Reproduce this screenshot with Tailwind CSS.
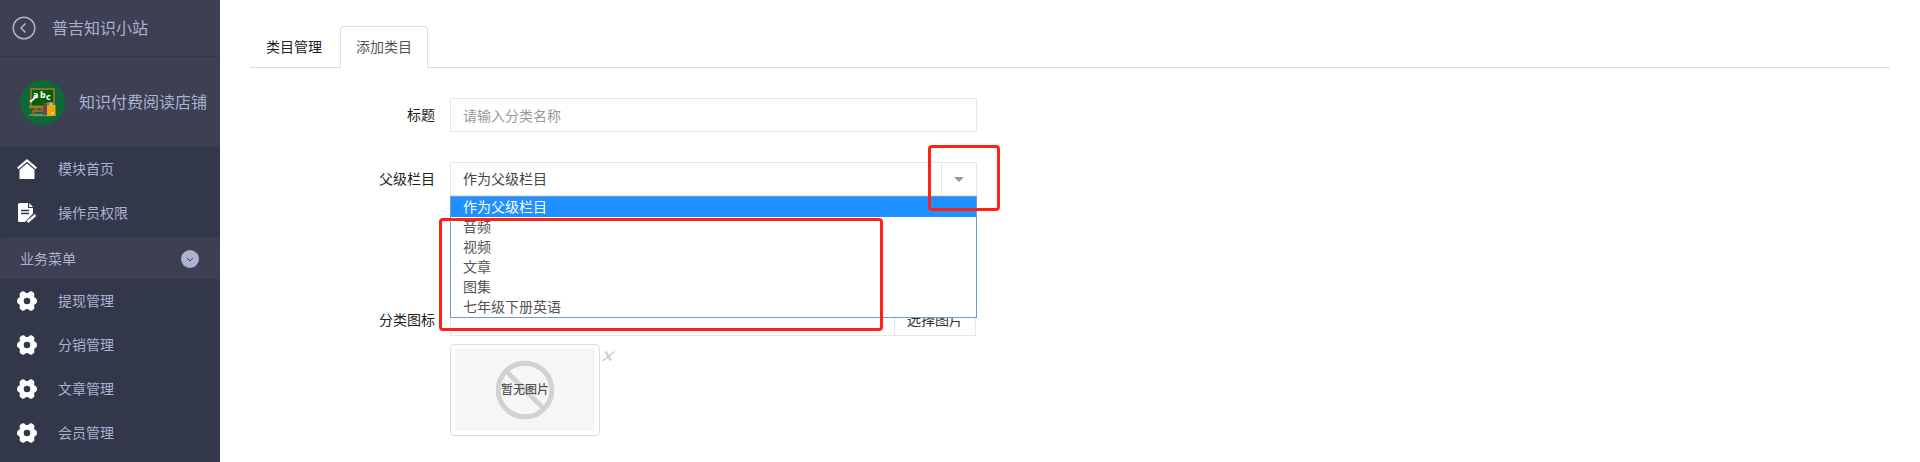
<!DOCTYPE html>
<html lang="zh-CN">
<head>
    <meta charset="UTF-8">
    <meta name="viewport" content="width=device-width, initial-scale=1.0">
    <title>添加类目</title>
    <script src="https://cdn.jsdelivr.net/npm/@tailwindcss/browser@4"></script>
</head>
<body class="bg-white font-['Noto_Sans_CJK_SC',sans-serif] text-sm text-[#333]">
    <!-- Shared icons -->
    <svg class="hidden">
        <symbol id="icon-gear" viewBox="0 0 20 20">
            <path fill-rule="evenodd" fill="#fff" d="M5 .5Q7-.2 8.300 1.500Q10 2.600 11.700 1.500Q13-.2 15 .5L17 2Q17.800 3.500 17 5Q17.200 6.800 18.800 7.300Q20 8 20 10Q20 12 18.800 12.700Q17.200 13.200 17 15Q17.800 16.500 17 18L15 19.500Q13 20.200 11.700 18.500Q10 17.400 8.300 18.500Q7 20.200 5 19.500L3 18Q2.200 16.500 3 15Q2.800 13.200 1.200 12.700Q0 12 0 10Q0 8 1.200 7.300Q2.800 6.800 3 5Q2.200 3.500 3 2ZM10 6.700A3.300 3.300 0 1 0 10 13.300A3.300 3.300 0 1 0 10 6.700Z"/>
        </symbol>
    </svg>

    <div class="flex min-h-screen">
        <!-- Sidebar -->
        <aside class="w-[220px] shrink-0 bg-[#33374a] text-[#abb1cf]">
            <a href="#" class="flex h-[57px] items-center gap-4 border-b border-[#33374a] bg-[#3c4052] pl-3 text-base">
                <svg class="size-6" viewBox="0 0 24 24" fill="none" stroke="currentColor">
                    <circle cx="12" cy="12" r="10.800" stroke-width="1.500"/>
                    <path d="M13.500 7.500L9 12l4.500 4.500" stroke-width="1.600"/>
                </svg>
                <span class="pb-0.5">普吉知识小站</span>
            </a>
            <div class="flex h-[90px] items-center gap-[14px] bg-[#3c4052] pl-5 text-base">
                <svg class="size-[45px] shrink-0" viewBox="0 0 45 45">
                    <circle cx="22.500" cy="22.500" r="22.500" fill="#0d6935"/>
                    <ellipse cx="22" cy="35" rx="14" ry="1.300" fill="#6d9377"/>
                    <path d="M18 27L12 35M20 27L29 35M12 31h14" stroke="#9a6424" stroke-width="2"/>
                    <rect x="11" y="9" width="23" height="17.500" fill="#075f08" stroke="#ad7430" stroke-width="1.500"/>
                    <path d="M9 27h17" stroke="#ad7430" stroke-width="2.500"/>
                    <path d="M10 22l7-6" stroke="#eee" stroke-width="2"/>
                    <g fill="#fff" font-family="DejaVu Sans" font-weight="bold" font-size="8">
                        <text x="13" y="18">a</text>
                        <text x="20" y="18">b</text>
                        <text x="26" y="20">c</text>
                    </g>
                    <path d="M23 23h5v12h-5z" fill="#5a5147"/>
                    <path d="M26 24l1-2h5l-1 4z" fill="#bd5363"/>
                    <path d="M29 25v-2.500h4v3z" fill="#79c8c9"/>
                    <path d="M27 25h8.500v11H27z" fill="#f5a30c"/>
                    <path d="M31 32h3v2h-3z" fill="#ffd35c"/>
                </svg>
                <span class="pb-0.5">知识付费阅读店铺</span>
            </div>
            <nav>
                <a href="#" class="flex h-11 items-center gap-[21px] pl-[17px]">
                    <svg class="size-5" viewBox="0 0 20 20">
                        <path d="M.7 9.300L10 1.500l9.300 7.800" fill="none" stroke="#fff" stroke-width="2.200"/>
                        <path d="M2.500 10.700L10 4.500l7.500 6.200V20h-15z" fill="#fff"/>
                    </svg>
                    <span class="pb-0.5">模块首页</span>
                </a>
                <a href="#" class="mb-[3px] flex h-11 items-center gap-[21px] pl-[17px]">
                    <svg class="size-5" viewBox="0 0 20 20">
                        <path d="M2.500 0H11v5h5v5.500L8 19H2.500Q1 19 1 17.500v-16Q1 0 2.500 0z" fill="#fff"/>
                        <path d="M12.200 0L16 4h-3.800z" fill="#fff"/>
                        <path d="M4 7.500h8M4 10.500h8" stroke="#33374a" stroke-width="1.300"/>
                        <path d="M10.500 19l8-7" stroke="#fff" stroke-width="2.400"/>
                    </svg>
                    <span class="pb-0.5">操作员权限</span>
                </a>
                <button type="button" class="flex h-[41px] w-full items-center justify-between rounded-t bg-[#3c4052] pr-[21px] pl-5">
                    <span class="pb-0.5">业务菜单</span>
                    <svg class="size-[18px]" viewBox="0 0 18 18">
                        <circle cx="9" cy="9" r="9" fill="#abb1cf"/>
                        <path d="M6 8l3 3 3-3" fill="none" stroke="#3c4052"/>
                    </svg>
                </button>
                <a href="#" class="flex h-11 items-center gap-[21px] pl-[17px]">
                    <svg class="size-5"><use href="#icon-gear"/></svg>
                    <span class="pb-0.5">提现管理</span>
                </a>
                <a href="#" class="flex h-11 items-center gap-[21px] pl-[17px]">
                    <svg class="size-5"><use href="#icon-gear"/></svg>
                    <span class="pb-0.5">分销管理</span>
                </a>
                <a href="#" class="flex h-11 items-center gap-[21px] pl-[17px]">
                    <svg class="size-5"><use href="#icon-gear"/></svg>
                    <span class="pb-0.5">文章管理</span>
                </a>
                <a href="#" class="flex h-11 items-center gap-[21px] pl-[17px]">
                    <svg class="size-5"><use href="#icon-gear"/></svg>
                    <span class="pb-0.5">会员管理</span>
                </a>
            </nav>
        </aside>

        <!-- Content -->
        <main class="min-w-0 flex-1 px-[30px] pt-[26px]">
            <div class="flex h-[42px] gap-0.5 border-b border-[#ddd]">
                <a href="#" class="px-4 pt-2.5 text-[#222]">类目管理</a>
                <a href="#" class="-mb-px rounded-t border border-b-0 border-[#ddd] bg-white px-[15px] pt-[9px] text-[#555]">添加类目</a>
            </div>

            <form class="pt-[30px]">
                <div class="mb-[30px] flex items-center">
                    <label for="title" class="w-[200px] pr-[15px] pb-0.5 text-right text-[#222]">标题</label>
                    <input id="title" type="text" placeholder="请输入分类名称" class="h-[34px] w-[527px] border border-[#e7e7eb] px-3 placeholder:text-[#999]">
                </div>

                <div class="mb-[106px] flex items-center">
                    <label for="parent" class="w-[200px] pr-[15px] pb-0.5 text-right text-[#222]">父级栏目</label>
                    <div class="relative flex w-[527px]">
                        <select id="parent" class="h-[34px] w-full appearance-none border border-[#e7e7eb] bg-white px-3 pb-0.5 text-[#444]">
                            <option>作为父级栏目</option>
                            <option>音频</option>
                            <option>视频</option>
                            <option>文章</option>
                            <option>图集</option>
                            <option>七年级下册英语</option>
                        </select>
                        <span class="pointer-events-none absolute inset-y-0 right-0 flex w-9 items-center justify-center border border-[#e7e7eb]">
                            <svg class="h-[5px] w-2.5" viewBox="0 0 10 5"><path d="M0 0h10L5 5z" fill="#999"/></svg>
                        </span>
                        <ul class="absolute inset-x-0 top-full z-10 border border-[#7399d3] bg-white leading-[18px] text-[#555]">
                            <li class="bg-[#1e90ff] px-3 pb-0.5 text-white">作为父级栏目</li>
                            <li class="px-3 pb-0.5">音频</li>
                            <li class="px-3 pb-0.5">视频</li>
                            <li class="px-3 pb-0.5">文章</li>
                            <li class="px-3 pb-0.5">图集</li>
                            <li class="px-3 pb-0.5">七年级下册英语</li>
                        </ul>
                        <!-- Highlight frames -->
                        <div class="pointer-events-none absolute -top-[17px] -right-[23px] z-20 h-[66px] w-[72px] rounded border-3 border-[#ff2113]"></div>
                        <div class="pointer-events-none absolute top-14 -left-[11px] z-20 h-[113px] w-[444px] rounded border-3 border-[#ff2113]"></div>
                    </div>
                </div>

                <div class="flex items-center">
                    <label for="icon" class="w-[200px] pr-[15px] text-right text-[#222]">分类图标</label>
                    <div class="flex h-[34px] w-[526px]">
                        <input id="icon" type="text" class="min-w-0 flex-1 border border-[#e7e7eb] px-3">
                        <button type="button" class="border border-l-0 border-[#e7e7eb] px-3 text-[#333]">选择图片</button>
                    </div>
                </div>

                <div class="mt-2 ml-[200px] flex items-start gap-0.5">
                    <div class="rounded border border-[#ddd] p-1">
                        <svg class="h-[82px] w-[140px]" viewBox="0 0 140 82">
                            <rect width="140" height="82" fill="#f6f6f6"/>
                            <g fill="none" stroke="#d2d2d2" stroke-width="5">
                                <circle cx="70" cy="41" r="26.800"/>
                                <path d="M51 22l38 38"/>
                            </g>
                            <text x="70" y="45" text-anchor="middle" font-size="12" font-weight="500" fill="#555">暂无图片</text>
                        </svg>
                    </div>
                    <button type="button" title="删除" class="mt-1.5">
                        <svg class="h-3 w-[13px]" viewBox="0 0 13 12" fill="none" stroke="#ccc">
                            <path d="M.5 11L12.500 1.500" stroke-width="1.500"/>
                            <path d="M3.500 1.500l5.500 9" stroke-width="2.200"/>
                        </svg>
                    </button>
                </div>
            </form>
        </main>
    </div>
</body>
</html>
